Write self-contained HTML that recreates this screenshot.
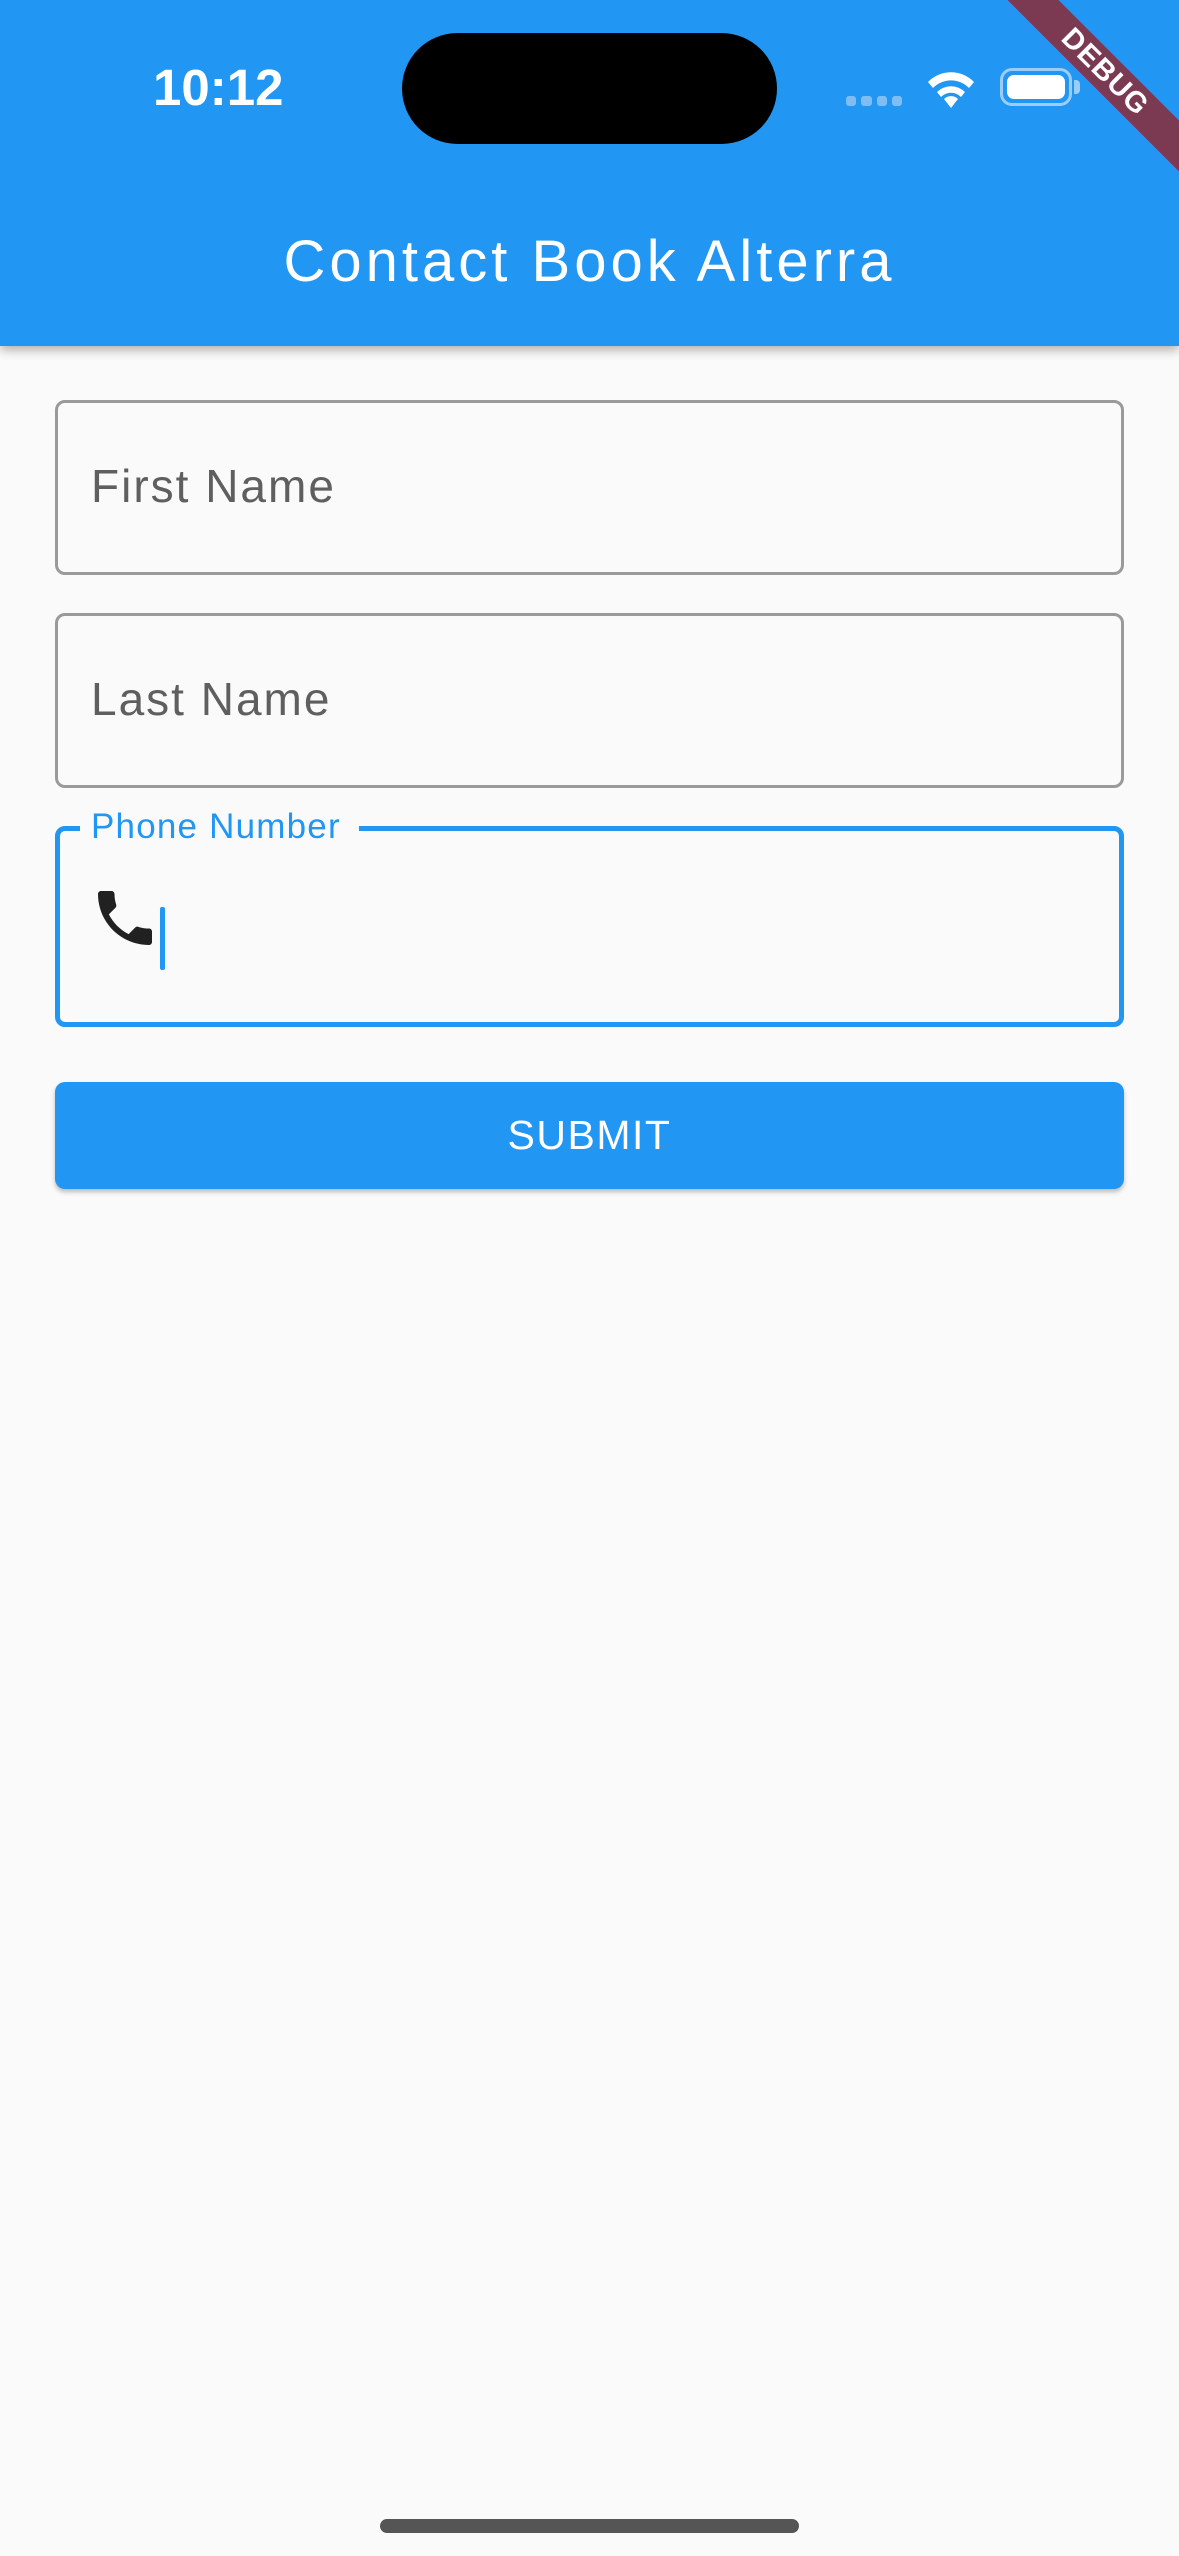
<!DOCTYPE html>
<html><head><meta charset="utf-8"><style>
*{margin:0;padding:0;box-sizing:border-box}
html,body{width:1179px;height:2556px;overflow:hidden;background:#fafafa;font-family:"Liberation Sans",sans-serif}
.bar{position:absolute;left:0;top:0;width:1179px;height:346px;background:#2196f3;box-shadow:0 4px 10px rgba(0,0,0,.3)}
.abs{position:absolute}
.field{position:absolute;left:55px;width:1069px;border:3px solid #9a9a9a;border-radius:10px}
.ph{position:absolute;left:91px;font-size:46px;color:#5f5f5f;line-height:1;letter-spacing:2px}
</style></head><body>
<div class="bar"></div>
<div class="abs" style="left:153px;top:62px;font-size:51px;font-weight:bold;color:#fff;line-height:1">10:12</div>
<div class="abs" style="left:402px;top:33px;width:375px;height:111px;background:#000;border-radius:56px"></div>
<div class="abs" style="left:846px;top:96px;width:56px;height:10px;display:flex;gap:5px">
<i style="flex:1;background:#7fbef5;border-radius:3px"></i><i style="flex:1;background:#7fbef5;border-radius:3px"></i><i style="flex:1;background:#7fbef5;border-radius:3px"></i><i style="flex:1;background:#7fbef5;border-radius:3px"></i></div>
<svg class="abs" style="left:924px;top:68px" width="54" height="40" viewBox="0 0 54 40"><path d="M27 40 L20 31 A10 10 0 0 1 34 31 Z" fill="#fff"/><path d="M13 24 A20 20 0 0 1 41 24 L37 29 A14 14 0 0 0 17 29 Z" fill="#fff"/><path d="M4 14 A32 32 0 0 1 50 14 L45 20 A25 25 0 0 0 9 20 Z" fill="#fff"/></svg>
<div class="abs" style="left:1000px;top:68px;width:72px;height:38px;border:3px solid #9ccdf8;border-radius:12px;padding:4px"><div style="width:100%;height:100%;background:#fff;border-radius:7px"></div></div>
<div class="abs" style="left:1074px;top:80px;width:6px;height:14px;background:#9ccdf8;border-radius:0 4px 4px 0"></div>
<div class="abs" style="left:0;top:233px;width:1179px;text-align:center;font-size:58px;color:#fff;line-height:1;letter-spacing:4px">Contact Book Alterra</div>
<div class="abs" style="left:905px;top:54px;width:400px;height:36px;background:#7b3a52;transform:rotate(45deg);color:#fff;font-weight:bold;font-size:29px;text-align:center;line-height:36px;letter-spacing:1px">DEBUG</div>

<div class="field" style="top:400px;height:175px"></div>
<div class="ph" style="top:463px">First Name</div>
<div class="field" style="top:613px;height:175px"></div>
<div class="ph" style="top:676px">Last Name</div>
<div class="field" style="top:826px;height:201px;border:5px solid #2196f3"></div>
<div class="abs" style="left:80px;top:815px;width:279px;height:25px;background:#fafafa"></div>
<div class="abs" style="left:91px;top:809px;font-size:35px;color:#2196f3;line-height:1;letter-spacing:1.2px">Phone Number</div>
<svg class="abs" style="left:89px;top:882px" width="72" height="72" viewBox="0 0 24 24"><path fill="#212121" d="M6.62 10.79c1.44 2.83 3.76 5.14 6.59 6.59l2.2-2.2c.27-.27.67-.36 1.02-.24 1.12.37 2.330.57 3.57.57.55 0 1 .45 1 1V20c0 .55-.45 1-1 1-9.39 0-17-7.610-17-17 0-.55.45-1 1-1h3.5c.55 0 1 .45 1 1 0 1.25.2 2.45.57 3.57.11.35.03.74-.25 1.02l-2.2 2.2z"/></svg>
<div class="abs" style="left:160px;top:907px;width:5px;height:63px;background:#2196f3;border-radius:2px"></div>

<div class="abs" style="left:55px;top:1082px;width:1069px;height:107px;background:#2196f3;border-radius:10px;box-shadow:0 3px 5px rgba(0,0,0,.25);color:#fff;font-size:41px;text-align:center;line-height:107px;letter-spacing:1.5px">SUBMIT</div>
<div class="abs" style="left:380px;top:2519px;width:419px;height:14px;background:#555;border-radius:7px"></div>
</body></html>
